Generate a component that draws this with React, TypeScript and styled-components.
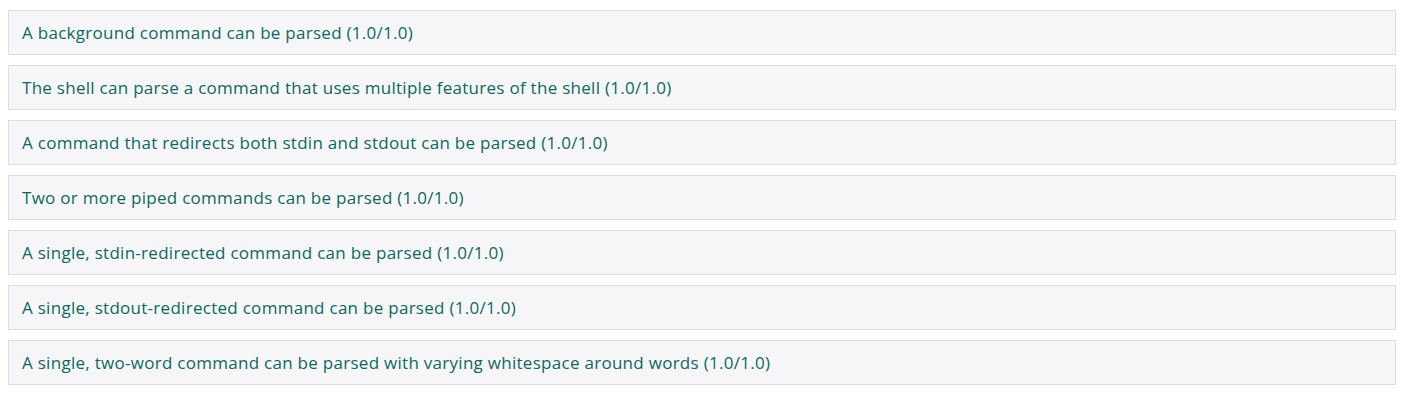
import React from "react";
import styled, { createGlobalStyle } from "styled-components";

const Global = createGlobalStyle`
  body {
    margin: 8px;
    background: #ffffff;
    font-family: "Open Sans", "Lato", sans-serif;
  }
`;

const List = styled.div`
  display: flex;
  flex-direction: column;
  gap: 10px;
  padding-top: 2px;
  width: 1388px;
`;

const Row = styled.div`
  box-sizing: border-box;
  height: 45px;
  display: flex;
  align-items: center;
  padding: 0 13px;
  background: #f6f6f9;
  border: 1px solid #dcdee5;
  color: #0b6a5d;
  font-size: 17px;
  letter-spacing: 0.28px;
`;

const items = [
  "A background command can be parsed (1.0/1.0)",
  "The shell can parse a command that uses multiple features of the shell (1.0/1.0)",
  "A command that redirects both stdin and stdout can be parsed (1.0/1.0)",
  "Two or more piped commands can be parsed (1.0/1.0)",
  "A single, stdin-redirected command can be parsed (1.0/1.0)",
  "A single, stdout-redirected command can be parsed (1.0/1.0)",
  "A single, two-word command can be parsed with varying whitespace around words (1.0/1.0)",
];

export default function App() {
  return (
    <>
      <Global />
      <List>
        {items.map((t) => (
          <Row key={t}>{t}</Row>
        ))}
      </List>
    </>
  );
}
